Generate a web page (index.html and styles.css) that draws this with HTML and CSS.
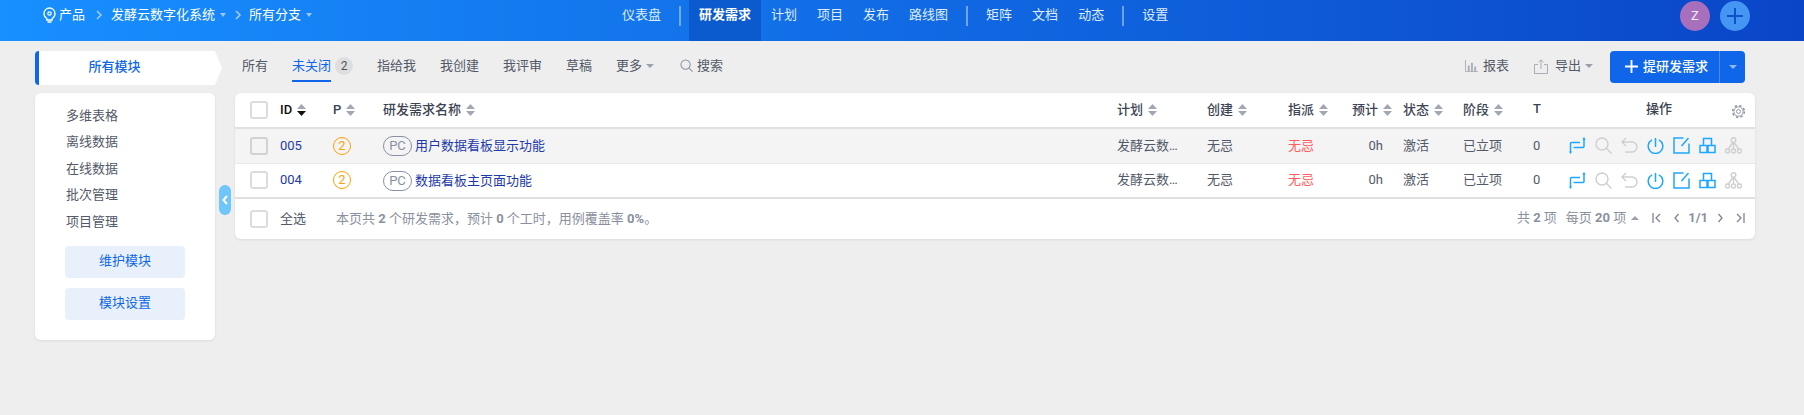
FILE: index.html
```html
<!DOCTYPE html>
<html lang="zh">
<head>
<meta charset="utf-8">
<title>研发需求</title>
<link rel="stylesheet" href="styles.css">
</head>
<body>
<svg class="defs" width="0" height="0" aria-hidden="true">
  <defs>
    <symbol id="i-route" viewBox="0 0 17 17"><path d="M1.500 15.500V6.500a1 1 0 0 1 1-1H11M4.500 10.500H14a1 1 0 0 0 1-1V1.500" fill="none" stroke="currentColor" stroke-width="1.500"/><path d="M15 0l1.700 2.400h-3.400zM1.500 17l-1.500-2.400h3z" fill="currentColor"/></symbol>
    <symbol id="i-search" viewBox="0 0 17 17"><circle cx="7" cy="7" r="6" fill="none" stroke="currentColor" stroke-width="1.400"/><path d="M11.500 11.500L16.500 16.500" stroke="currentColor" stroke-width="1.400"/></symbol>
    <symbol id="i-undo" viewBox="0 0 17 17"><path d="M5 1L1 5l4 4M1 5h10a5 5 0 0 1 5 5v0a5 5 0 0 1-5 5H4" fill="none" stroke="currentColor" stroke-width="1.400"/></symbol>
    <symbol id="i-power" viewBox="0 0 17 17"><path d="M8.500 1v9M5 2.800a7.300 7.300 0 1 0 7 0" fill="none" stroke="currentColor" stroke-width="1.500"/></symbol>
    <symbol id="i-edit" viewBox="0 0 17 17"><path d="M10.500 1H1v15h15V6.500M15.500 1L8.500 9" fill="none" stroke="currentColor" stroke-width="1.500"/></symbol>
    <symbol id="i-split" viewBox="0 0 17 17"><path d="M4.500 8V1.500h8V8M1 8.500h7v7H1zM9 8.500h7v7H9z" fill="none" stroke="currentColor" stroke-width="1.500"/></symbol>
    <symbol id="i-tree" viewBox="0 0 17 17"><circle cx="8.500" cy="3" r="2.300" fill="none" stroke="currentColor" stroke-width="1.400"/><circle cx="2.500" cy="14" r="2" fill="none" stroke="currentColor" stroke-width="1.400"/><circle cx="8.500" cy="14" r="2" fill="none" stroke="currentColor" stroke-width="1.400"/><circle cx="14.500" cy="14" r="2" fill="none" stroke="currentColor" stroke-width="1.400"/><path d="M8.500 5.300V12M7.500 6L3 12.500M9.500 6L14 12.500" fill="none" stroke="currentColor" stroke-width="1.400"/></symbol>
    <symbol id="i-sort" viewBox="0 0 9 12"><path d="M4.500 0L9 5H0z" fill="#a3a7b3"/><path d="M4.500 12L0 7h9z" fill="#a3a7b3"/></symbol>
    <symbol id="i-sortd" viewBox="0 0 9 12"><path d="M4.500 0L9 5H0z" fill="#a3a7b3"/><path d="M4.500 12L0 7h9z" fill="#111"/></symbol>
  </defs>
</svg>

<header class="top">
  <div class="crumbs">
    <svg class="pin" viewBox="0 0 13 16" width="13" height="16"><path d="M3.800 11.500C2 10.400 1 8.600 1 6.500a5.500 5.500 0 0 1 11 0c0 2.100-1 3.900-2.800 5V13H3.800zM4.500 15h4" fill="none" stroke="#fff" stroke-width="1.300"/><circle cx="6.500" cy="6.500" r="1.700" fill="none" stroke="#fff" stroke-width="1.200"/></svg>
    <span class="crumb">产品</span>
    <svg class="chev" viewBox="0 0 6 10" width="6" height="10"><path d="M1 1l4 4-4 4" fill="none" stroke="#a9d0fb" stroke-width="1.500"/></svg>
    <span class="crumb">发酵云数字化系统</span><i class="caret caret-light"></i>
    <svg class="chev" viewBox="0 0 6 10" width="6" height="10"><path d="M1 1l4 4-4 4" fill="none" stroke="#a9d0fb" stroke-width="1.500"/></svg>
    <span class="crumb">所有分支</span><i class="caret caret-light"></i>
  </div>
  <nav class="nav">
    <a class="nav-item">仪表盘</a>
    <span class="nav-sep"></span>
    <a class="nav-item nav-active">研发需求</a>
    <a class="nav-item">计划</a>
    <a class="nav-item">项目</a>
    <a class="nav-item">发布</a>
    <a class="nav-item">路线图</a>
    <span class="nav-sep"></span>
    <a class="nav-item">矩阵</a>
    <a class="nav-item">文档</a>
    <a class="nav-item">动态</a>
    <span class="nav-sep"></span>
    <a class="nav-item">设置</a>
  </nav>
  <div class="top-right">
    <span class="avatar">Z</span>
    <span class="add-circle"><svg viewBox="0 0 16 16" width="16" height="16"><path d="M8 0v16M0 8h16" stroke="#0e52c9" stroke-width="2"/></svg></span>
  </div>
</header>

<main class="main">
  <aside class="side">
    <div class="side-head">所有模块</div>
    <div class="side-panel">
      <ul class="mods">
        <li>多维表格</li>
        <li>离线数据</li>
        <li>在线数据</li>
        <li>批次管理</li>
        <li>项目管理</li>
      </ul>
      <a class="side-btn">维护模块</a>
      <a class="side-btn">模块设置</a>
    </div>
    <span class="collapse"><svg viewBox="0 0 6 10" width="6" height="10"><path d="M5 1L1.500 5 5 9" fill="none" stroke="#fff" stroke-width="2"/></svg></span>
  </aside>

  <section class="content">
    <div class="toolbar">
      <div class="tabs">
        <a class="tab">所有</a>
        <a class="tab tab-on"><span class="tab-label">未关闭</span><span class="badge">2</span></a>
        <a class="tab">指给我</a>
        <a class="tab">我创建</a>
        <a class="tab">我评审</a>
        <a class="tab">草稿</a>
        <a class="tab">更多<i class="caret caret-gray"></i></a>
        <a class="tab tab-search"><svg viewBox="0 0 14 14" width="13" height="13"><circle cx="6" cy="6" r="5" fill="none" stroke="#8c93a0" stroke-width="1.100"/><path d="M9.500 9.500L13.500 13.500" stroke="#8c93a0" stroke-width="1.100"/></svg>搜索</a>
      </div>
      <div class="actions">
        <a class="act"><svg viewBox="0 0 14 13" width="13" height="12"><path d="M.5 0v12.500H14" fill="none" stroke="#a9adb6" stroke-width="1"/><path d="M3 6h2v6H3zM6.500 3h2v9h-2zM10 7h2v5h-2z" fill="#a9adb6"/></svg>报表</a>
        <a class="act act-export"><svg viewBox="0 0 14 15" width="14" height="15"><path d="M4 5.500H.5v9h13v-9H10M7 10V1M4.500 3.200L7 .8l2.500 2.400" fill="none" stroke="#a9adb6" stroke-width="1"/></svg><span class="act-text">导出</span><i class="caret caret-gray"></i></a>
        <div class="primary">
          <span class="primary-main"><svg viewBox="0 0 14 14" width="13" height="13"><path d="M7 0v14M0 7h14" stroke="#fff" stroke-width="2"/></svg>提研发需求</span>
          <span class="primary-more"><i class="caret caret-btn"></i></span>
        </div>
      </div>
    </div>

    <div class="card">
      <table class="grid">
        <colgroup>
          <col class="c-chk"><col class="c-id"><col class="c-p"><col class="c-name"><col class="c-plan"><col class="c-create"><col class="c-assign"><col class="c-est"><col class="c-status"><col class="c-stage"><col class="c-t"><col class="c-ops">
        </colgroup>
        <thead>
          <tr>
            <th class="chk"><span class="box"></span></th>
            <th class="th-id">ID<svg class="sort"><use href="#i-sortd"/></svg></th>
            <th>P<svg class="sort"><use href="#i-sort"/></svg></th>
            <th>研发需求名称<svg class="sort"><use href="#i-sort"/></svg></th>
            <th>计划<svg class="sort"><use href="#i-sort"/></svg></th>
            <th>创建<svg class="sort"><use href="#i-sort"/></svg></th>
            <th>指派<svg class="sort"><use href="#i-sort"/></svg></th>
            <th>预计<svg class="sort"><use href="#i-sort"/></svg></th>
            <th>状态<svg class="sort"><use href="#i-sort"/></svg></th>
            <th>阶段<svg class="sort"><use href="#i-sort"/></svg></th>
            <th class="th-up">T</th>
            <th class="th-up"><div class="ops-head"><span>操作</span><svg viewBox="0 0 16 16" width="15" height="15"><circle cx="8" cy="8" r="5" fill="none" stroke="#8c93a0" stroke-width="1"/><circle cx="8" cy="8" r="6.300" fill="none" stroke="#8c93a0" stroke-width="1.600" stroke-dasharray="2.500 2.450"/><circle cx="8" cy="8" r="2.100" fill="none" stroke="#8c93a0" stroke-width="1"/></svg></div></th>
          </tr>
        </thead>
        <tbody>
          <tr class="row-hover">
            <td class="chk"><span class="box box-dark"></span></td>
            <td class="id">005</td>
            <td><span class="pri">2</span></td>
            <td><span class="tag">PC</span><a class="title">用户数据看板显示功能</a></td>
            <td>发酵云数…</td>
            <td>无忌</td>
            <td class="red">无忌</td>
            <td class="est">0h</td>
            <td>激活</td>
            <td>已立项</td>
            <td>0</td>
            <td><div class="ops">
              <svg class="op"><use href="#i-route"/></svg><svg class="op op-off"><use href="#i-search"/></svg><svg class="op op-off"><use href="#i-undo"/></svg><svg class="op"><use href="#i-power"/></svg><svg class="op"><use href="#i-edit"/></svg><svg class="op"><use href="#i-split"/></svg><svg class="op op-off"><use href="#i-tree"/></svg>
            </div></td>
          </tr>
          <tr>
            <td class="chk"><span class="box"></span></td>
            <td class="id">004</td>
            <td><span class="pri">2</span></td>
            <td><span class="tag">PC</span><a class="title">数据看板主页面功能</a></td>
            <td>发酵云数…</td>
            <td>无忌</td>
            <td class="red">无忌</td>
            <td class="est">0h</td>
            <td>激活</td>
            <td>已立项</td>
            <td>0</td>
            <td><div class="ops">
              <svg class="op"><use href="#i-route"/></svg><svg class="op op-off"><use href="#i-search"/></svg><svg class="op op-off"><use href="#i-undo"/></svg><svg class="op"><use href="#i-power"/></svg><svg class="op"><use href="#i-edit"/></svg><svg class="op"><use href="#i-split"/></svg><svg class="op op-off"><use href="#i-tree"/></svg>
            </div></td>
          </tr>
        </tbody>
      </table>
      <div class="foot">
        <span class="box"></span>
        <span class="all">全选</span>
        <span class="summary">本页共 <b>2</b> 个研发需求，预计 <b>0</b> 个工时，用例覆盖率 <b>0%</b>。</span>
        <div class="pager">
          <span>共 <b>2</b> 项</span>
          <span class="per">每页 <b>20</b> 项</span><i class="caret caret-up"></i>
          <svg class="pg pg-first" viewBox="0 0 9 10" width="9" height="10"><path d="M1 0v10M8 1L4 5l4 4" fill="none" stroke="#7d8494" stroke-width="1.300"/></svg>
          <svg class="pg" viewBox="0 0 5 10" width="5" height="10"><path d="M4.500 1L1 5l3.500 4" fill="none" stroke="#7d8494" stroke-width="1.300"/></svg>
          <b class="pg-num">1/1</b>
          <svg class="pg" viewBox="0 0 5 10" width="5" height="10"><path d="M.5 1L4 5 .5 9" fill="none" stroke="#7d8494" stroke-width="1.300"/></svg>
          <svg class="pg" viewBox="0 0 9 10" width="9" height="10"><path d="M8 0v10M1 1l4 4-4 4" fill="none" stroke="#7d8494" stroke-width="1.300"/></svg>
        </div>
      </div>
    </div>
  </section>
</main>
</body>
</html>
```

FILE: styles.css
```css
* { box-sizing: border-box; }
html, body { margin: 0; height: 100%; overflow: hidden; }
body {
  background: #eeeeee;
  color: #3c4353;
  font: 13px/20px "Roboto", "Noto Sans CJK SC", "Liberation Sans", sans-serif;
}
ul { margin: 0; padding: 0; list-style: none; }
a { color: inherit; text-decoration: none; }
i { display: inline-block; }
.defs { position: absolute; }

.caret { width: 0; height: 0; border-left: 4px solid transparent; border-right: 4px solid transparent; border-top: 4px solid #9aa0ac; }
.caret-light { border-top-color: #9cc6f7; border-left-width: 3.500px; border-right-width: 3.500px; margin-left: 5px; }
.caret-gray { border-top-color: #9aa0ac; margin-left: 4px; }
.caret-btn { border-top-color: #8fbaf3; }
.caret-up { border-top: 0; border-bottom: 4px solid #9aa0ac; margin-left: 5px; }

/* header */
.top {
  height: 41px;
  display: flex;
  color: #fff;
  background: linear-gradient(90deg, #1890ff 0%, #0a45c8 100%);
}
.crumbs { display: flex; align-items: center; height: 30px; padding-left: 43px; width: 612px; flex: none; }
.pin { margin-right: 3px; }
.chev { margin: 0 9px 0 11px; }
.crumbs .caret + .chev { margin-left: 9px; margin-right: 8px; }
.crumb { white-space: nowrap; }
.nav { display: flex; color: #dfecfd; }
.nav-item { padding: 5px 10px 0; height: 41px; white-space: nowrap; }
.nav-active { background: #0b5bce; color: #fff; font-weight: 700; }
.nav-sep { width: 2px; height: 20px; margin: 6px 8px 0; background: rgba(255,255,255,.4); }
.top-right { margin-left: auto; display: flex; gap: 10px; padding: 1px 54px 0 0; }
.avatar { width: 30px; height: 30px; border-radius: 50%; background: #a76fbc; color: #f0e8f5; display: flex; align-items: center; justify-content: center; font-size: 13px; }
.add-circle { width: 30px; height: 30px; border-radius: 50%; background: #4596f3; display: flex; align-items: center; justify-content: center; }

/* main */
.main { display: flex; padding: 10px 49px 0 35px; }
.side { width: 180px; flex: none; position: relative; margin-right: 20px; }
.side-head {
  width: 187px; height: 34px;
  border-left: 4px solid #0f66e8;
  border-radius: 4px 0 0 4px;
  background: #fff;
  clip-path: polygon(0 0, 180px 0, 187px 50%, 180px 100%, 0 100%);
  color: #0f66e8; font-weight: 500;
  display: flex; align-items: center; justify-content: center;
  padding: 0 32px 2px 0;
}
.side-panel {
  margin-top: 8px; height: 247px;
  background: #fff; border-radius: 6px;
  box-shadow: 0 1px 3px rgba(0,0,0,.08);
  padding: 13px 30px 0;
}
.mods li { height: 26.400px; line-height: 20px; color: #525968; padding-left: 1px; }
.side-btn {
  display: flex; width: 120px; height: 32px; margin-bottom: 10px;
  background: #e8f1fb; color: #0f66e8; border-radius: 4px;
  align-items: center; justify-content: center;
  padding-bottom: 1px;
}
.mods { margin-bottom: 8px; }
.collapse {
  position: absolute; left: 184px; top: 134px;
  width: 12px; height: 30px; border-radius: 6px;
  background: #6fc6fb;
  display: flex; align-items: center; justify-content: center;
}

/* toolbar */
.content { flex: 1; min-width: 0; }
.toolbar { height: 32px; margin-bottom: 10px; display: flex; justify-content: space-between; padding: 0 10px 0 7px; }
.tabs { display: flex; gap: 24px; align-items: center; color: #525968; }
.tab { display: flex; align-items: center; height: 32px; padding-bottom: 3px; white-space: nowrap; }
.tab-on { color: #0f66e8; padding-bottom: 0; }
.tab-label { height: 28px; margin-top: 1px; line-height: 24px; border-bottom: 2px solid #0f66e8; }
.badge { width: 18px; height: 18px; border-radius: 50%; margin: -2px 0 0 4px; background: #dedede; color: #4b5262; font-size: 12px; line-height: 18px; text-align: center; }
.tab-search { margin-left: 2px; gap: 4px; }
.actions { display: flex; align-items: center; color: #525968; }
.act { display: flex; align-items: center; gap: 5px; white-space: nowrap; padding-bottom: 2px; }
.act-export { margin-left: 25px; margin-right: 17px; gap: 0; }
.act-text { margin-left: 7px; }
.primary { display: flex; height: 32px; width: 135px; border-radius: 4px; background: #0f66e8; color: #fff; }
.primary-main { width: 110px; display: flex; align-items: center; gap: 5px; padding: 0 0 1px 15px; border-right: 1px solid #4a8bed; font-weight: 500; white-space: nowrap; }
.primary-more { flex: 1; display: flex; align-items: center; justify-content: center; }

/* table card */
.card { background: #fff; border-radius: 6px; box-shadow: 0 1px 3px rgba(0,0,0,.08); overflow: hidden; }
.grid { width: 100%; table-layout: fixed; border-collapse: collapse; }
.c-chk { width: 45px; } .c-id { width: 53px; } .c-p { width: 50px; } .c-name { width: 734px; }
.c-plan { width: 90px; } .c-create { width: 81px; } .c-assign { width: 64px; } .c-est { width: 51px; }
.c-status { width: 60px; } .c-stage { width: 70px; } .c-t { width: 34px; } .c-ops { width: 188px; }
th { height: 35px; padding: 0; text-align: left; font-weight: 500; color: #3c4353; border-bottom: 2px solid #e0e0e0; white-space: nowrap; }
th.th-up { padding-bottom: 2px; }
td { height: 35px; padding: 0; border-bottom: 1px solid #e8e8e8; white-space: nowrap; color: #525968; }
tbody tr:last-child td { border-bottom: 2px solid #e0e0e0; }
.chk { padding: 0 0 0 15px; }
.box { display: block; width: 18px; height: 18px; border: 2px solid #dcdcdc; border-radius: 3px; background: #fff; }
.box-dark { border-color: #d2d2d2; background: #f4f4f4; }
.row-hover td { background: #f4f4f4; }
.sort { width: 9px; height: 12px; margin-left: 5px; vertical-align: -2px; }
.th-id { color: #111; }
.ops-head { display: flex; align-items: center; justify-content: space-between; padding: 0 9px 0 79px; }
.ops-head svg { margin-top: 4px; }
td.id { color: #1d3aa8; }
.pri { display: block; width: 18px; height: 18px; border: 1px solid #ff9f0a; border-radius: 50%; color: #ff9f0a; font-size: 13px; line-height: 16px; text-align: center; }
.tag { display: inline-block; height: 20px; width: 29px; border: 1px solid #8990a3; border-radius: 10px; color: #8990a3; font-size: 13px; line-height: 17px; text-align: center; vertical-align: middle; margin-right: 3px; }
.title { color: #1d3aa8; vertical-align: middle; }
td.red { color: #ff5d5d; }
.est { text-align: right; padding-right: 20px; }
.ops { display: flex; gap: 9px; padding-left: 2px; color: #1ea7ff; align-items: center; }
.op { width: 17px; height: 17px; flex: none; }
.op-off { color: #cfcfcf; }

.foot { height: 40px; display: flex; align-items: center; padding: 0 10px 0 15px; }
.all { margin-left: 12px; color: #525968; }
.summary { margin-left: 30px; color: #8a909e; }
.pager { margin-left: auto; display: flex; align-items: center; padding-bottom: 2px; color: #8a909e; white-space: nowrap; }
.summary b, .pager b { font-weight: 700; }
.per { margin-left: 9px; }
.pg { margin-left: 13px; }
.pg-first { margin-left: 13px; }
.pg-num { margin-left: 9px; margin-right: -3px; }
```
